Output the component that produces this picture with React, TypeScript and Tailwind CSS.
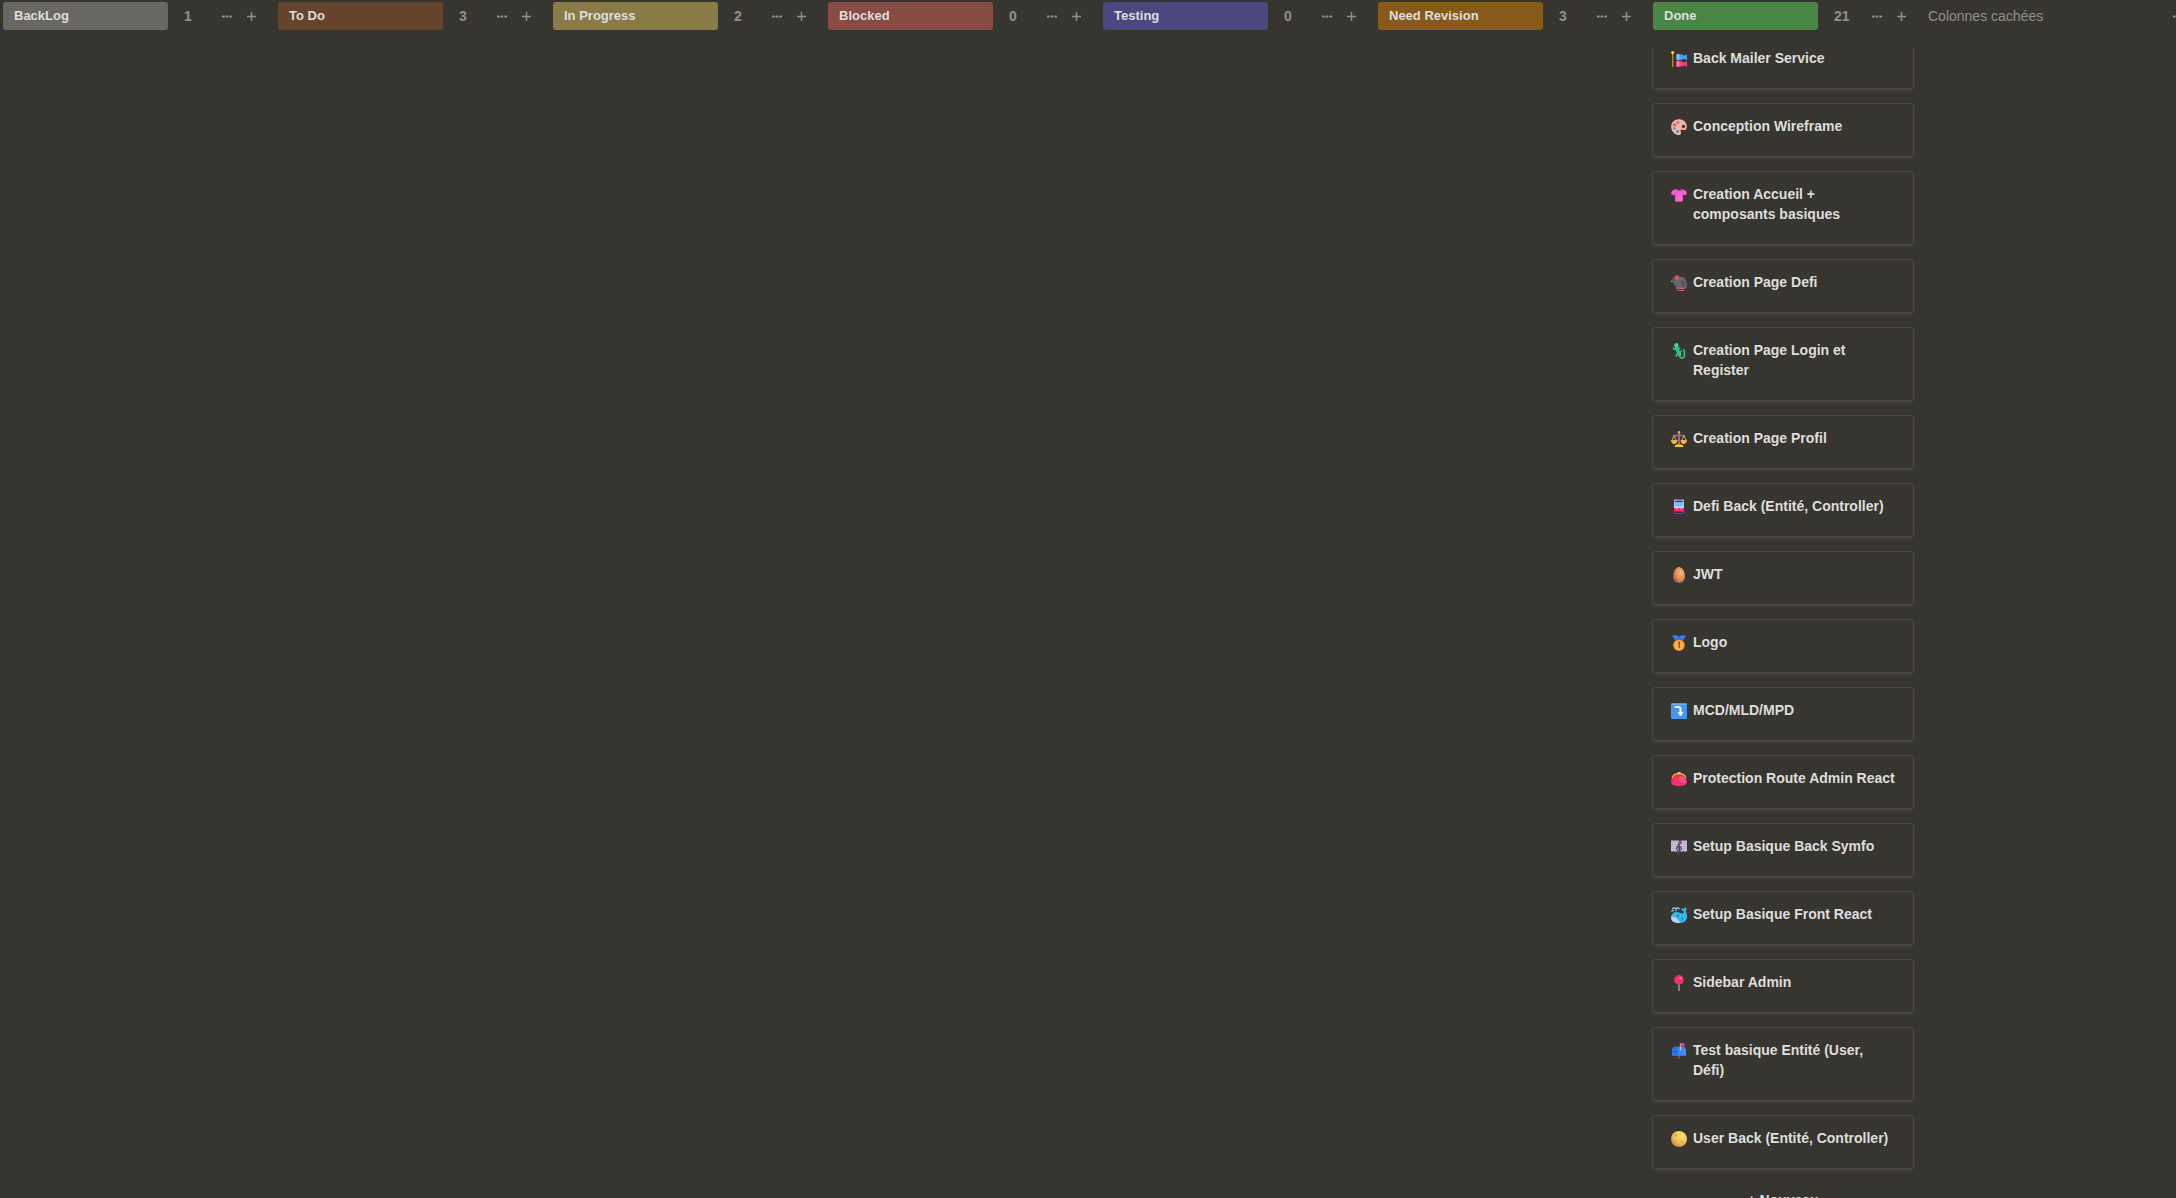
import React from "react";

type Column = { name: string; count: number; color: string };

const columns: Column[] = [
  { name: "BackLog", count: 1, color: "bg-[#696762]" },
  { name: "To Do", count: 3, color: "bg-[#64452c]" },
  { name: "In Progress", count: 2, color: "bg-[#887b45]" },
  { name: "Blocked", count: 0, color: "bg-[#884c45]" },
  { name: "Testing", count: 0, color: "bg-[#4b487f]" },
  { name: "Need Revision", count: 3, color: "bg-[#885a1a]" },
  { name: "Done", count: 21, color: "bg-[#498645]" },
];

const Icon = ({ children }: { children: React.ReactNode }) => (
  <svg viewBox="0 0 16 16" className="mt-[3px] size-4 shrink-0" aria-hidden="true">
    {children}
  </svg>
);

const Streamer = () => (
  <Icon>
    <rect x="1" y="1.5" width="1.4" height="14.5" fill="#b5852f" />
    <circle cx="1.7" cy="1.6" r="1.6" fill="#fcd53f" />
    <path d="M5.500 3.400c2-.8 5.200-.4 7.700 1.200L16 3.200v6L13.200 7.800c-2 1.400-5.200 1.600-7.700.8Z" fill="#4a9df5" />
    <path d="M5.500 10.200c2-.8 5.200-.3 7.700 1.400L16 10.200v5.800l-2.800-1.400c-2 1.400-5.200 1.700-7.700 1Z" fill="#ee3f86" />
    <path d="M5.500 3.500c.8-.3 1.600-.5 2.400-.4.700 1.800.6 4-.1 5.800-.800 0-1.500-.1-2.300-.300Z" fill="#80c4ff" />
    <path d="M5.500 10.200c.8-.3 1.600-.4 2.400-.3.700 1.700.6 4-.1 5.900-.8 0-1.500 0-2.300-.2Z" fill="#ff77ae" />
  </Icon>
);

const Palette = () => (
  <Icon>
    <path d="M8.300.3C3.700.2.300 3.200.200 7.500c-.1 4 2.500 7.800 6.800 8.400 1.500.2 2.800-.3 3-1.700.2-1.300-.9-2.400-.2-3.200.8-.9 2.200.3 3.800.1 1.600-.2 2.400-1.900 2.200-4C15.400 3.100 12.300.400 8.300.3Z" fill="#ffb3a0" />
    <circle cx="6.800" cy="3.600" r="1.500" fill="#be60e8" />
    <circle cx="3.500" cy="5.800" r="1.500" fill="#ee3f70" />
    <circle cx="3.300" cy="9.500" r="1.400" fill="#25b8ad" />
    <circle cx="6.500" cy="12.400" r="1.600" fill="#4a94f2" />
    <circle cx="12.500" cy="7.400" r="1.700" fill="#37352f" />
    <path d="M10.800 8.500a2 2 0 0 0 3.500 0" stroke="#dd8d7c" strokeWidth=".7" fill="none" />
  </Icon>
);

const Shirt = () => (
  <Icon>
    <path d="M5 2 .8 3.900.100 7.200l3 1.300 1-.7v6.400c2.400.7 5.400.7 7.800 0V7.800l1 .7 3-1.300-.7-3.300L11 2c-1.500 1.500-4.500 1.500-6 0Z" fill="#fb5fce" />
    <path d="M5 2c1.500 1.500 4.500 1.500 6 0l.8.5c-1 2.400-6.600 2.400-7.600 0Z" fill="#c83ea0" />
    <path d="M4.100 7.800V5.500M11.900 7.800V5.500" stroke="#d748b1" strokeWidth=".7" />
    <path d="M6 7c2 .8 4 .3 5-.5v6.500c-1 .5-3 .5-4 .3Z" fill="#ff78dc" opacity=".5" />
  </Icon>
);

const Rat = () => (
  <Icon>
    <path d="M.300 6.300C.400 4 2 2.500 4.300 1.900 6.500 .900 8 1.500 9 1.800c3.800-.3 6.700 3 7 7.200.1 2.500-1.700 4-4.200 4H5.700l-.3-1.600C3.500 10.500 2.900 9 2.700 7.900Z" fill="#6c6370" />
    <path d="M9.500 6c2.500-.8 4.600.8 4.800 3.200-.2 1.700-1.500 2.600-3.500 2.600Z" fill="#594f5d" />
    <circle cx="5.900" cy="2.600" r="2.500" fill="#9b5e65" />
    <circle cx="6" cy="2.900" r="1.500" fill="#f05560" />
    <circle cx="2.600" cy="5" r=".7" fill="#241e28" />
    <circle cx=".6" cy="6.400" r=".6" fill="#f0809a" />
    <path d="M15 12c.3 1.400-.8 1.400-3 1.400H8.300c-2.800 0-2.600 2.100 0 2.100h4.500M5 12.900h2" stroke="#e8758c" strokeWidth=".9" strokeLinecap="round" fill="none" />
  </Icon>
);

const Lizard = () => (
  <Icon>
    <path d="M5.200 2.800C6 6 6.600 8.500 8.600 11.500" stroke="#39c887" strokeWidth="3.400" strokeLinecap="round" fill="none" />
    <path d="M3.200 2.800C3.300 1 4.500.1 5.600.1S7.700 1.600 7.500 3.300c-.8 1.500-3.800 1.600-4.300-.5Z" fill="#48d897" />
    <path d="M6 6 3.200 6.300 2.500 5M7 6.500l1.700-1.500M8 10.800l-2.600.6v1.800M8.400 9.500l1.800-1.200M8.400 11.500c.4 4.800 5 4.800 5 .3V9c0-1-.2-1.600-.8-2.300" stroke="#39c887" strokeWidth="1.500" strokeLinecap="round" strokeLinejoin="round" fill="none" />
    <path d="M5.800 4.500c.5 2.500 1 4.500 2.400 6.300" stroke="#23a56c" strokeWidth=".8" fill="none" />
  </Icon>
);

const Scales = () => (
  <Icon>
    <path d="M8 1v13" stroke="#8a7387" strokeWidth="2" />
    <path d="M2.600 4.500c2.500.8 3.600-.5 5.400-.5s2.900 1.300 5.400.5" stroke="#8a7387" strokeWidth="1.700" fill="none" />
    <path d="m3 4.500-2.200 5M3 4.500l2.200 5M13 4.500l-2.200 5M13 4.500l2.200 5" stroke="#c9a39a" strokeWidth="1" />
    <path d="M0 9h6.500c-.1 5.200-6.400 5.200-6.500 0ZM9.500 9H16c-.1 5.200-6.400 5.200-6.500 0Z" fill="#ffae43" />
    <circle cx="8" cy="1.200" r="1.200" fill="#ffb347" />
    <path d="M5.500 13.600h5c.9.300 1.600 1 2 2.400h-9c.4-1.400 1.100-2.100 2-2.400Z" fill="#fcc92e" />
  </Icon>
);

const Tram = () => (
  <Icon>
    <rect x="3" y=".200" width="10" height="14" rx="1.600" fill="#d6cbe8" />
    <rect x="4.500" y=".200" width="7" height="1.300" rx=".6" fill="#63477b" />
    <rect x="3.700" y="2.300" width="8.600" height="4.900" rx=".8" fill="#5ac8f8" />
    <rect x="3.700" y="2" width="8.600" height="1" fill="#493961" />
    <path d="M3 9h10v3.200c0 1.200-.7 1.900-1.800 1.900H4.800C3.700 14.100 3 13.400 3 12.200Z" fill="#ed2d81" />
    <path d="M5 9.700h1.400M9.600 9.700H11" stroke="#ffc83d" strokeWidth="1" />
    <path d="M3.500 12.600h9l-.5 1.500H4Z" fill="#511467" />
  </Icon>
);

const Egg = () => (
  <Icon>
    <defs>
      <radialGradient id="egg" cx=".65" cy=".35" r=".75">
        <stop offset="0" stopColor="#f9b978" />
        <stop offset=".55" stopColor="#d98c57" />
        <stop offset="1" stopColor="#9c5a40" />
      </radialGradient>
    </defs>
    <path d="M8 0c3.300 0 6 5.200 6 9.300 0 4-2.600 6.600-6 6.600s-6-2.600-6-6.600C2 5.200 4.700 0 8 0Z" fill="url(#egg)" />
  </Icon>
);

const Medal = () => (
  <Icon>
    <path d="M.8.5h5.700L8 2.300 9.500.5h5.700L12 5.200H4Z" fill="#3b7df0" />
    <path d="M5.500 3.200h5v2h-5Z" fill="#2862c9" />
    <circle cx="8" cy="10.200" r="5.800" fill="#f8973b" />
    <circle cx="8" cy="10.200" r="4.500" fill="#ffae4c" />
    <path d="M6.900 8.400 8.300 7.400v5.600" stroke="#93552f" strokeWidth="1.500" fill="none" />
  </Icon>
);

const ArrowDown = () => (
  <Icon>
    <rect width="16" height="16" rx="1.200" fill="#4596f3" />
    <path d="M1 1h14v1H1Z" fill="#66b2ff" />
    <path d="M4.500 4h2.700c1.500 0 2.300.8 2.300 2.300v4" stroke="#f3f3f8" strokeWidth="2" strokeLinecap="round" fill="none" />
    <path d="M7 9.500h5l-2.500 3.500Z" fill="#f3f3f8" stroke="#f3f3f8" strokeWidth=".7" strokeLinejoin="round" />
  </Icon>
);

const Purse = () => (
  <Icon>
    <path d="M1.300 7C2.300 1.200 13.700 1.200 14.700 7" stroke="#fbb62f" strokeWidth="1.500" fill="none" />
    <circle cx="7.300" cy="2" r=".9" fill="#ffd24a" />
    <circle cx="8.800" cy="2" r=".9" fill="#ffd24a" />
    <path d="M3 5.300c1.200-1.800 8.800-1.800 10 0 1.700 1.300 3 3.200 3 5.300 0 3.200-2.500 4.600-8 4.600s-8-1.400-8-4.600c0-2.100 1.300-4 3-5.300Z" fill="#f2306c" />
    <path d="M9 5.200c3.500.2 6 2.800 5.500 5.800-1.500 1.600-4.500.8-6-.8C7.500 8.500 7.500 6.500 9 5.200Z" fill="#ff5b91" opacity=".8" />
  </Icon>
);

const Score = () => (
  <Icon>
    <rect y="1.500" width="16" height="11" fill="#c7bcd3" />
    <path d="M0 3.500h16M0 5.500h16M0 7.500h16M0 9.500h16" stroke="#afa2bf" strokeWidth=".5" />
    <path d="M6.300 13.600c.2 1.300 1.900 1.400 2.300.2.600-3-1.300-7.800-.6-10.800.5-2.300 2.400-1.800 2 .3-.5 2.300-4.600 3-4.500 6 .1 3.300 5.200 2.600 4.900 0-.3-2.300-3.300-2-3-.1" stroke="#493b59" strokeWidth="1.100" strokeLinecap="round" fill="none" />
  </Icon>
);

const Whale = () => (
  <Icon>
    <path d="M.200 10.500C.200 7 2.600 5 5.500 5c2.600 0 4.300 1.500 5.900 1.500 1.300-.2 1.500-1.400 1.100-2.500-1.700-.3-2.500-1.500-2-2.800L13 1.800 14.500.200c1.300 1 1.300 2.600.2 3.900C16 6 16.200 9 15.800 11.500c-.8 2.800-3.500 4.500-7.300 4.500C4 16 .200 15 .200 10.500Z" fill="#38b5ef" />
    <path d="M.200 9.500c4 0 7.400 2.400 8.600 6.500C3.500 16.200-.300 14.500.200 9.500Z" fill="#b8d5fb" />
    <circle cx="6.800" cy="8.700" r=".8" fill="#203654" />
    <path d="M5 4V1.800M5 1.800C3.500.2 2 .8 1.300 2M5.300 1.800C6.500.2 7.800.8 8.300 2M.800 4.300l1.600-.8" stroke="#83d6f5" strokeWidth="1.200" strokeLinecap="round" fill="none" />
    <path d="M10.500 10.500c1.300.3 1.500 1.800.5 3.200" stroke="#1a82cf" strokeWidth="1.200" fill="none" />
  </Icon>
);

const Pin = () => (
  <Icon>
    <rect x="7.200" y="8" width="1.600" height="8" fill="#998ba3" />
    <circle cx="8" cy="4.800" r="4.800" fill="#ee3068" />
    <circle cx="9.600" cy="3.200" r="1.300" fill="#ff87ae" />
  </Icon>
);

const Mailbox = () => (
  <Icon>
    <rect x="7" y="12" width="2" height="4" fill="#88425f" />
    <path d="M4 3.700h8c2 0 3 1.500 3 3.500v5.600H4Z" fill="#3b8bfa" />
    <path d="M1 7.200c0-4.500 6.500-4.500 6.500 0v5.600H1Z" fill="#2f75ea" />
    <path d="M2.500 8.500h3.500" stroke="#184cad" strokeWidth="1" />
    <path d="M9.500 7V.5" stroke="#c8b7d5" strokeWidth="1.200" />
    <path d="M9.500.3H13.500V3.300H9.500Z" fill="#f0477b" />
  </Icon>
);

const Moon = () => (
  <Icon>
    <defs>
      <radialGradient id="moon" cx=".65" cy=".3" r=".8">
        <stop offset="0" stopColor="#ffe27a" />
        <stop offset=".6" stopColor="#f3bd5e" />
        <stop offset="1" stopColor="#bd7c3f" />
      </radialGradient>
    </defs>
    <circle cx="8" cy="8" r="8" fill="url(#moon)" />
    <circle cx="5" cy="4.500" r="1.400" fill="#dfa44f" />
    <circle cx="9" cy="3" r=".9" fill="#e6b559" />
    <circle cx="10.800" cy="10.500" r="1.500" fill="#e5ad52" />
    <circle cx="4.500" cy="10.500" r="1.100" fill="#d2954a" />
  </Icon>
);

const cards = [
  { title: "Back Mailer Service", icon: <Streamer /> },
  { title: "Conception Wireframe", icon: <Palette /> },
  { title: "Creation Accueil + composants basiques", icon: <Shirt /> },
  { title: "Creation Page Defi", icon: <Rat /> },
  { title: "Creation Page Login et Register", icon: <Lizard /> },
  { title: "Creation Page Profil", icon: <Scales /> },
  { title: "Defi Back (Entité, Controller)", icon: <Tram /> },
  { title: "JWT", icon: <Egg /> },
  { title: "Logo", icon: <Medal /> },
  { title: "MCD/MLD/MPD", icon: <ArrowDown /> },
  { title: "Protection Route Admin React", icon: <Purse /> },
  { title: "Setup Basique Back Symfo", icon: <Score /> },
  { title: "Setup Basique Front React", icon: <Whale /> },
  { title: "Sidebar Admin", icon: <Pin /> },
  { title: "Test basique Entité (User, Défi)", icon: <Mailbox /> },
  { title: "User Back (Entité, Controller)", icon: <Moon /> },
];

const Dots = () => (
  <svg viewBox="0 0 10 3" className="h-[3px] w-[10px]" fill="currentColor" aria-hidden="true">
    <rect y=".5" width="2.700" height="2" rx=".6" />
    <rect x="3.600" y=".5" width="2.700" height="2" rx=".6" />
    <rect x="7.300" y=".5" width="2.700" height="2" rx=".6" />
  </svg>
);

const Plus = () => (
  <svg viewBox="0 0 9 9" className="size-[9px]" stroke="currentColor" aria-hidden="true">
    <path d="M4.500 0v9M0 4.500h9" strokeWidth="1.500" />
  </svg>
);

const ColumnHeader = ({ name, count, color }: Column) => (
  <div className="flex w-[275px] shrink-0 items-center">
    <h2 className={`h-7 w-[165px] rounded-[3px] px-[11px] text-[13px] leading-7 font-bold text-[#dededc] ${color}`}>{name}</h2>
    <span className="ml-4 w-[31px] text-sm leading-5 font-bold text-[#91908c]">{count}</span>
    <button type="button" aria-label={`Options ${name}`} className="flex size-6 items-center justify-center text-[#91908c]">
      <Dots />
    </button>
    <button type="button" aria-label={`Ajouter à ${name}`} className="flex size-6 items-center justify-center text-[#91908c]">
      <Plus />
    </button>
  </div>
);

export default function App() {
  return (
    <main className="flex h-screen flex-col overflow-hidden bg-[#37352f] font-['Liberation_Sans',Arial,sans-serif]">
      <header className="flex h-12 shrink-0 items-start pt-0.5 pl-[3px]">
        {columns.map((c) => (
          <ColumnHeader key={c.name} {...c} />
        ))}
        <div className="flex h-7 min-w-[262px] shrink-0 items-center text-[#91908c]">
          <span className="flex-1 text-sm">Colonnes cachées</span>
          <button type="button" aria-label="Options des colonnes cachées" className="flex size-6 items-center justify-center">
            <Dots />
          </button>
        </div>
      </header>
      <div className="flex min-h-0 flex-1 overflow-hidden pl-[3px]">
        {columns.map((c) => (
          <section key={c.name} aria-label={c.name} className="w-[275px] shrink-0 pr-[15px]">
            {c.name === "Done" && (
              <div className="-mt-3 flex flex-col gap-4">
                {cards.map((card) => (
                  <article
                    key={card.title}
                    className="flex gap-1.5 rounded-[3px] bg-[#37352f] pt-3 pr-4 pb-5 pl-[18px] shadow-[0_0_0_1px_#4b4944,0_2px_4px_#4b4944]"
                  >
                    {card.icon}
                    <h3 className="text-sm leading-5 font-bold text-[#dededc]">{card.title}</h3>
                  </article>
                ))}
                <button type="button" className="h-8 text-center text-sm font-bold text-[#dededc]">
                  + Nouveau
                </button>
              </div>
            )}
          </section>
        ))}
      </div>
    </main>
  );
}
